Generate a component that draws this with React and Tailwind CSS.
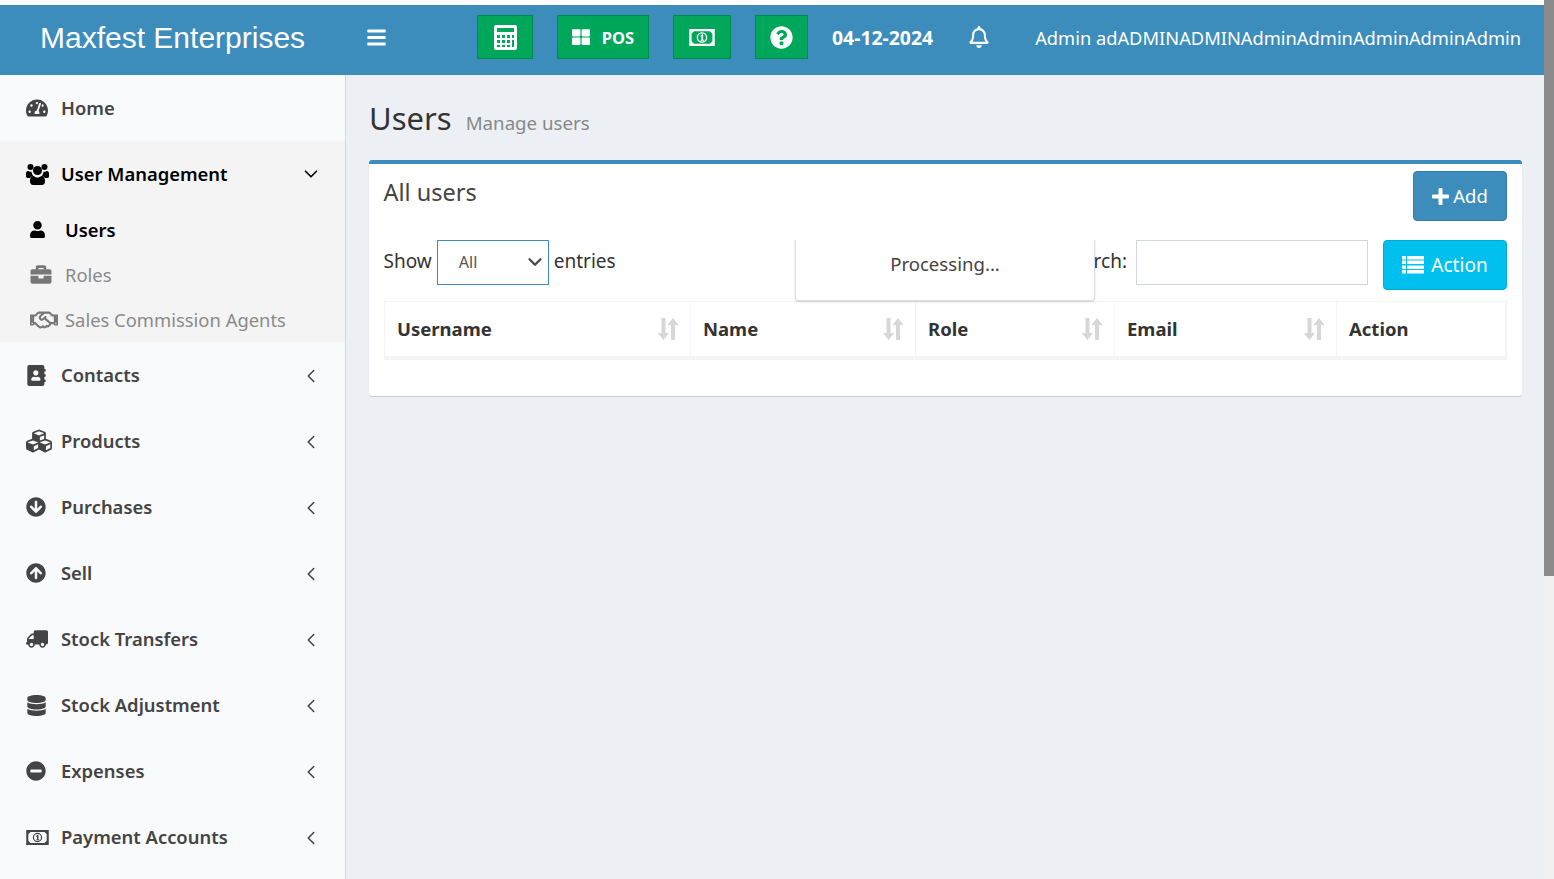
import {
  FaBars,
  FaTachometerAlt,
  FaUser,
  FaBriefcase,
  FaRegHandshake,
  FaAddressBook,
  FaCubes,
  FaArrowCircleDown,
  FaArrowCircleUp,
  FaTruck,
  FaDatabase,
  FaMinusCircle,
  FaThLarge,
  FaQuestionCircle,
  FaRegBell,
} from "react-icons/fa"
import { LuChevronDown, LuChevronLeft } from "react-icons/lu"

const MoneyIcon = ({ className }) => (
  <svg className={className} viewBox="0 0 24 16" fill="currentColor" fillRule="evenodd">
    <path d="M0 0h24v16H0zM4.500 2.200h15l2.300 2.300v7l-2.300 2.300h-15l-2.300-2.300v-7z" />
    <path d="M7 8a5 5 0 1 0 10 0A5 5 0 1 0 7 8zM8.300 8a3.700 3.700 0 1 1 7.400 0a3.700 3.700 0 1 1-7.400 0z" />
    <path d="M10.300 6.700l1.700-1.700h1v5h1v1h-3.500v-1h1V6.700l-.6.700z" />
  </svg>
)

const menu = [
  { label: "Contacts", icon: FaAddressBook, size: "text-[21px]" },
  { label: "Products", icon: FaCubes, size: "text-[26px]" },
  { label: "Purchases", icon: FaArrowCircleDown, size: "text-[20px]" },
  { label: "Sell", icon: FaArrowCircleUp, size: "text-[20px]" },
  { label: "Stock Transfers", icon: FaTruck, size: "text-[22px] -scale-x-100" },
  { label: "Stock Adjustment", icon: FaDatabase, size: "text-[21px]" },
  { label: "Expenses", icon: FaMinusCircle, size: "text-[20px]" },
  { label: "Payment Accounts", icon: MoneyIcon, size: "h-[15px] w-[23px]" },
]

const columns = [
  { label: "Username", width: "w-[306px]", sort: true },
  { label: "Name", width: "w-[225px]", sort: true },
  { label: "Role", width: "w-[199px]", sort: true },
  { label: "Email", width: "w-[222px]", sort: true },
  { label: "Action", width: "flex-1", sort: false },
]

const SortIcon = () => (
  <svg width="22" height="24" viewBox="0 0 22 24" fill="#d7d7d7">
    <path d="M4.500 1h4v15h3.500l-5.500 7-5.500-7h3.500z" />
    <path d="M14 23h4V8h3.500L16 1l-5.500 7H14z" />
  </svg>
)

// fa4 style calculator, the package only has the newer one
const CalculatorIcon = () => (
  <svg width="23" height="25" viewBox="0 0 23 25" fill="#fff">
    <path
      fillRule="evenodd"
      d="M2 0h19a2 2 0 0 1 2 2v21a2 2 0 0 1-2 2H2a2 2 0 0 1-2-2V2a2 2 0 0 1 2-2zM3 3v4h17V3zM3 10v3h3v-3zM8 10v3h3v-3zM13 10v3h3v-3zM18 10v3h2v-3zM3 15v3h3v-3zM8 15v3h3v-3zM13 15v3h3v-3zM18 15v7h2v-7zM3 20v2h3v-2zM8 20v2h3v-2zM13 20v2h3v-2z"
    />
  </svg>
)

const UsersIcon = () => (
  <svg width="23" height="21" viewBox="0 0 23 21" fill="currentColor">
    <circle cx="4.500" cy="3" r="3" />
    <circle cx="18.500" cy="3" r="3" />
    <circle cx="11.500" cy="6.500" r="4.500" />
    <path d="M0 9.500C0 7.500 1.500 7 2.500 7c1 .7 2 1 3 .8.100 1.500.8 3 1.800 4-1.300.4-2.500 1.200-3.300 2.200H1.500C.5 14 0 13 0 12z" />
    <path d="M23 9.500C23 7.500 21.500 7 20.500 7c-1 .7-2 1-3 .8-.1 1.500-.8 3-1.800 4 1.300.4 2.500 1.200 3.300 2.200h2.500c1 0 1.500-1 1.500-2z" />
    <path d="M7.500 12c1 .9 2.500 1.500 4 1.500s3-.6 4-1.500c2.500 0 3.500 2.500 3.500 5 0 2.500-1.200 4-3 4H7c-1.800 0-3-1.500-3-4 0-2.500 1-5 3.500-5z" />
  </svg>
)

const PlusIcon = () => (
  <svg width="17" height="17" viewBox="0 0 17 17" fill="#fff">
    <path d="M6.500 1a1 1 0 0 1 1-1h2a1 1 0 0 1 1 1v5.500H16a1 1 0 0 1 1 1v2a1 1 0 0 1-1 1h-5.500V16a1 1 0 0 1-1 1h-2a1 1 0 0 1-1-1v-5.500H1a1 1 0 0 1-1-1v-2a1 1 0 0 1 1-1h5.500z" />
  </svg>
)

const ListIcon = () => (
  <svg width="22" height="18" viewBox="0 0 22 18" fill="#fff">
    <path d="M0 0h4v3.500H0zM5 0h17v3.500H5zM0 4.500h4V8H0zM5 4.500h17V8H5zM0 9.500h4V13H0zM5 9.500h17V13H5zM0 14h4v3.500H0zM5 14h17v3.500H5z" />
  </svg>
)

const HeaderButton = ({ className, children }) => (
  <div
    className={`flex h-[44px] shrink-0 items-center justify-center border border-[#008d4c] bg-[#00a65a] text-white ${className}`}
  >
    {children}
  </div>
)

const Header = () => (
  <header className="flex h-[70px] w-full items-center whitespace-nowrap bg-[#3c8dbc] pb-[6px] text-white">
    <div className="mt-[2px] w-[345px] shrink-0 pl-10 font-['Liberation_Sans',sans-serif] text-[30px] leading-none">
      Maxfest Enterprises
    </div>
    <FaBars className="ml-[21px] shrink-0 text-[21px]" />
    <HeaderButton className="ml-[90px] w-[56px]">
      <CalculatorIcon />
    </HeaderButton>
    <HeaderButton className="ml-6 w-[92px] gap-3 text-[16.500px] font-bold">
      <FaThLarge className="text-[18px]" />
      <span className="mt-[2px]">POS</span>
    </HeaderButton>
    <HeaderButton className="ml-6 w-[58px]">
      <MoneyIcon className="h-[17px] w-[26px]" />
    </HeaderButton>
    <HeaderButton className="ml-6 w-[53px]">
      <FaQuestionCircle className="text-[23px]" />
    </HeaderButton>
    <span className="ml-6 mt-[2px] text-[19.400px] font-bold">04-12-2024</span>
    <FaRegBell className="ml-[35px] text-[22px]" />
    <span className="ml-auto mt-[2px] pr-[33px] text-[18.300px]">
      Admin adADMINADMINAdminAdminAdminAdminAdmin
    </span>
  </header>
)

const NavIcon = ({ children }) => (
  <span className="flex w-[35px] shrink-0 items-center">{children}</span>
)

const Sidebar = () => (
  <aside className="h-[804px] w-[346px] shrink-0 overflow-hidden border-r border-[#d2d6de] bg-[#f9fafc] text-[18.400px] font-semibold text-[#444]">
    <div className="flex h-[66px] items-center pl-[26px]">
      <NavIcon>
        <FaTachometerAlt className="text-[22px]" />
      </NavIcon>
      Home
    </div>
    <div className="h-[201px] bg-[#f4f4f5] text-black">
      <div className="flex h-[66px] items-center pl-[26px] pr-[23px]">
        <NavIcon>
          <UsersIcon />
        </NavIcon>
        <span className="flex-1">User Management</span>
        <LuChevronDown className="text-[22px]" strokeWidth={1.8} />
      </div>
      <div className="flex h-[45px] items-center pl-[30px]">
        <FaUser className="mr-[20px] w-[15px] text-[17px]" />
        Users
      </div>
      <div className="flex h-[45px] items-center pl-[30px] font-normal text-[#8a8a8a]">
        <FaBriefcase className="mr-[13px] w-[22px] text-[21px] text-[#777]" />
        Roles
      </div>
      <div className="flex h-[45px] items-center pl-[30px] font-normal text-[#8a8a8a]">
        <FaRegHandshake className="mr-[7px] w-[28px] text-[28px] text-[#777]" />
        Sales Commission Agents
      </div>
    </div>
    {menu.map((item) => (
      <div key={item.label} className="flex h-[66px] items-center pl-[26px] pr-[23px]">
        <NavIcon>
          <item.icon className={item.size} />
        </NavIcon>
        <span className="flex-1">{item.label}</span>
        <LuChevronLeft className="mt-[2px] text-[22px]" strokeWidth={1.7} />
      </div>
    ))}
  </aside>
)

const UsersBox = () => (
  <section className="relative mt-[20px] h-[236px] rounded-[3px] border-t-[4px] border-[#3c8dbc] bg-white shadow-[0_1px_1px_rgba(0,0,0,0.15)]">
    <div className="flex items-start justify-between pl-[14.500px] pr-[15px] pt-[7px]">
      <h3 className="mt-[5px] text-[23.500px] leading-[32px] text-[#444]">All users</h3>
      <button className="flex h-[50px] w-[94px] items-center justify-center gap-1 rounded-[4px] border border-[#367fa9] bg-[#3c8dbc] text-[18.500px] text-white">
        <PlusIcon />
        Add
      </button>
    </div>
    <div className="mt-[19px] flex items-start pl-[14.500px] pr-[15px] text-[#333]">
      <span className="mt-[6px] text-[19px] leading-[30px]">Show</span>
      <div className="relative ml-[5px] flex h-[45px] w-[112px] items-center border border-[#3c8dbc] pl-[21px] text-[16.200px] text-[#555]">
        All
        <LuChevronDown className="absolute right-[2px] top-[10px] text-[22px] text-[#444]" strokeWidth={2.4} />
      </div>
      <span className="ml-[5px] mt-[6px] text-[19px] leading-[30px]">entries</span>
      <div className="ml-auto flex items-start">
        <span className="mt-[6px] text-[19px] leading-[30px]">Search:</span>
        <div className="ml-[9px] h-[45px] w-[232px] border border-[#d2d6de]" />
      </div>
      <button className="ml-[15px] flex h-[50px] w-[124px] items-center justify-center gap-[7px] rounded-[4px] border border-[#00acd6] bg-[#00c0ef] text-[19px] text-white">
        <ListIcon />
        Action
      </button>
    </div>
    <div className="ml-[15px] mr-[15px] mt-[11px] flex h-[59px] border border-b-[4px] border-[#f4f4f4] text-[18.500px] font-bold text-[#333]">
      {columns.map((col) => (
        <div
          key={col.label}
          className={`flex items-center justify-between border-r border-[#f4f4f4] pl-3 pr-[11px] ${col.width}`}
        >
          {col.label}
          {col.sort && <SortIcon />}
        </div>
      ))}
    </div>
    {/* processing popup sits over the toolbar */}
    <div className="absolute left-[426px] top-[76px] flex h-[61px] w-[300px] items-center justify-center rounded-b-[4px] border border-t-0 border-[#ddd] bg-white pb-[12px] text-[18.600px] text-[#444] shadow-[0_1px_2px_rgba(0,0,0,0.15)]">
      Processing...
    </div>
  </section>
)

export default function App() {
  return (
    <div className="relative h-[879px] w-full overflow-hidden bg-white pt-[5px] font-['Noto_Sans',sans-serif]">
      <Header />
      <div className="flex bg-[#ecf0f5]">
        <Sidebar />
        <main className="h-[804px] flex-1 pl-[23px] pr-[32px] pt-[21px]">
          <div className="flex items-baseline gap-[14px]">
            <h1 className="text-[31px] leading-[44px] text-[#333]">Users</h1>
            <span className="text-[18.700px] text-[#888]">Manage users</span>
          </div>
          <UsersBox />
        </main>
      </div>
      {/* browser scrollbar */}
      <div className="absolute right-0 top-0 h-full w-[10px] bg-[#f1f1f1]">
        <div className="h-[576px] bg-[#8b8b8b]" />
      </div>
    </div>
  )
}
